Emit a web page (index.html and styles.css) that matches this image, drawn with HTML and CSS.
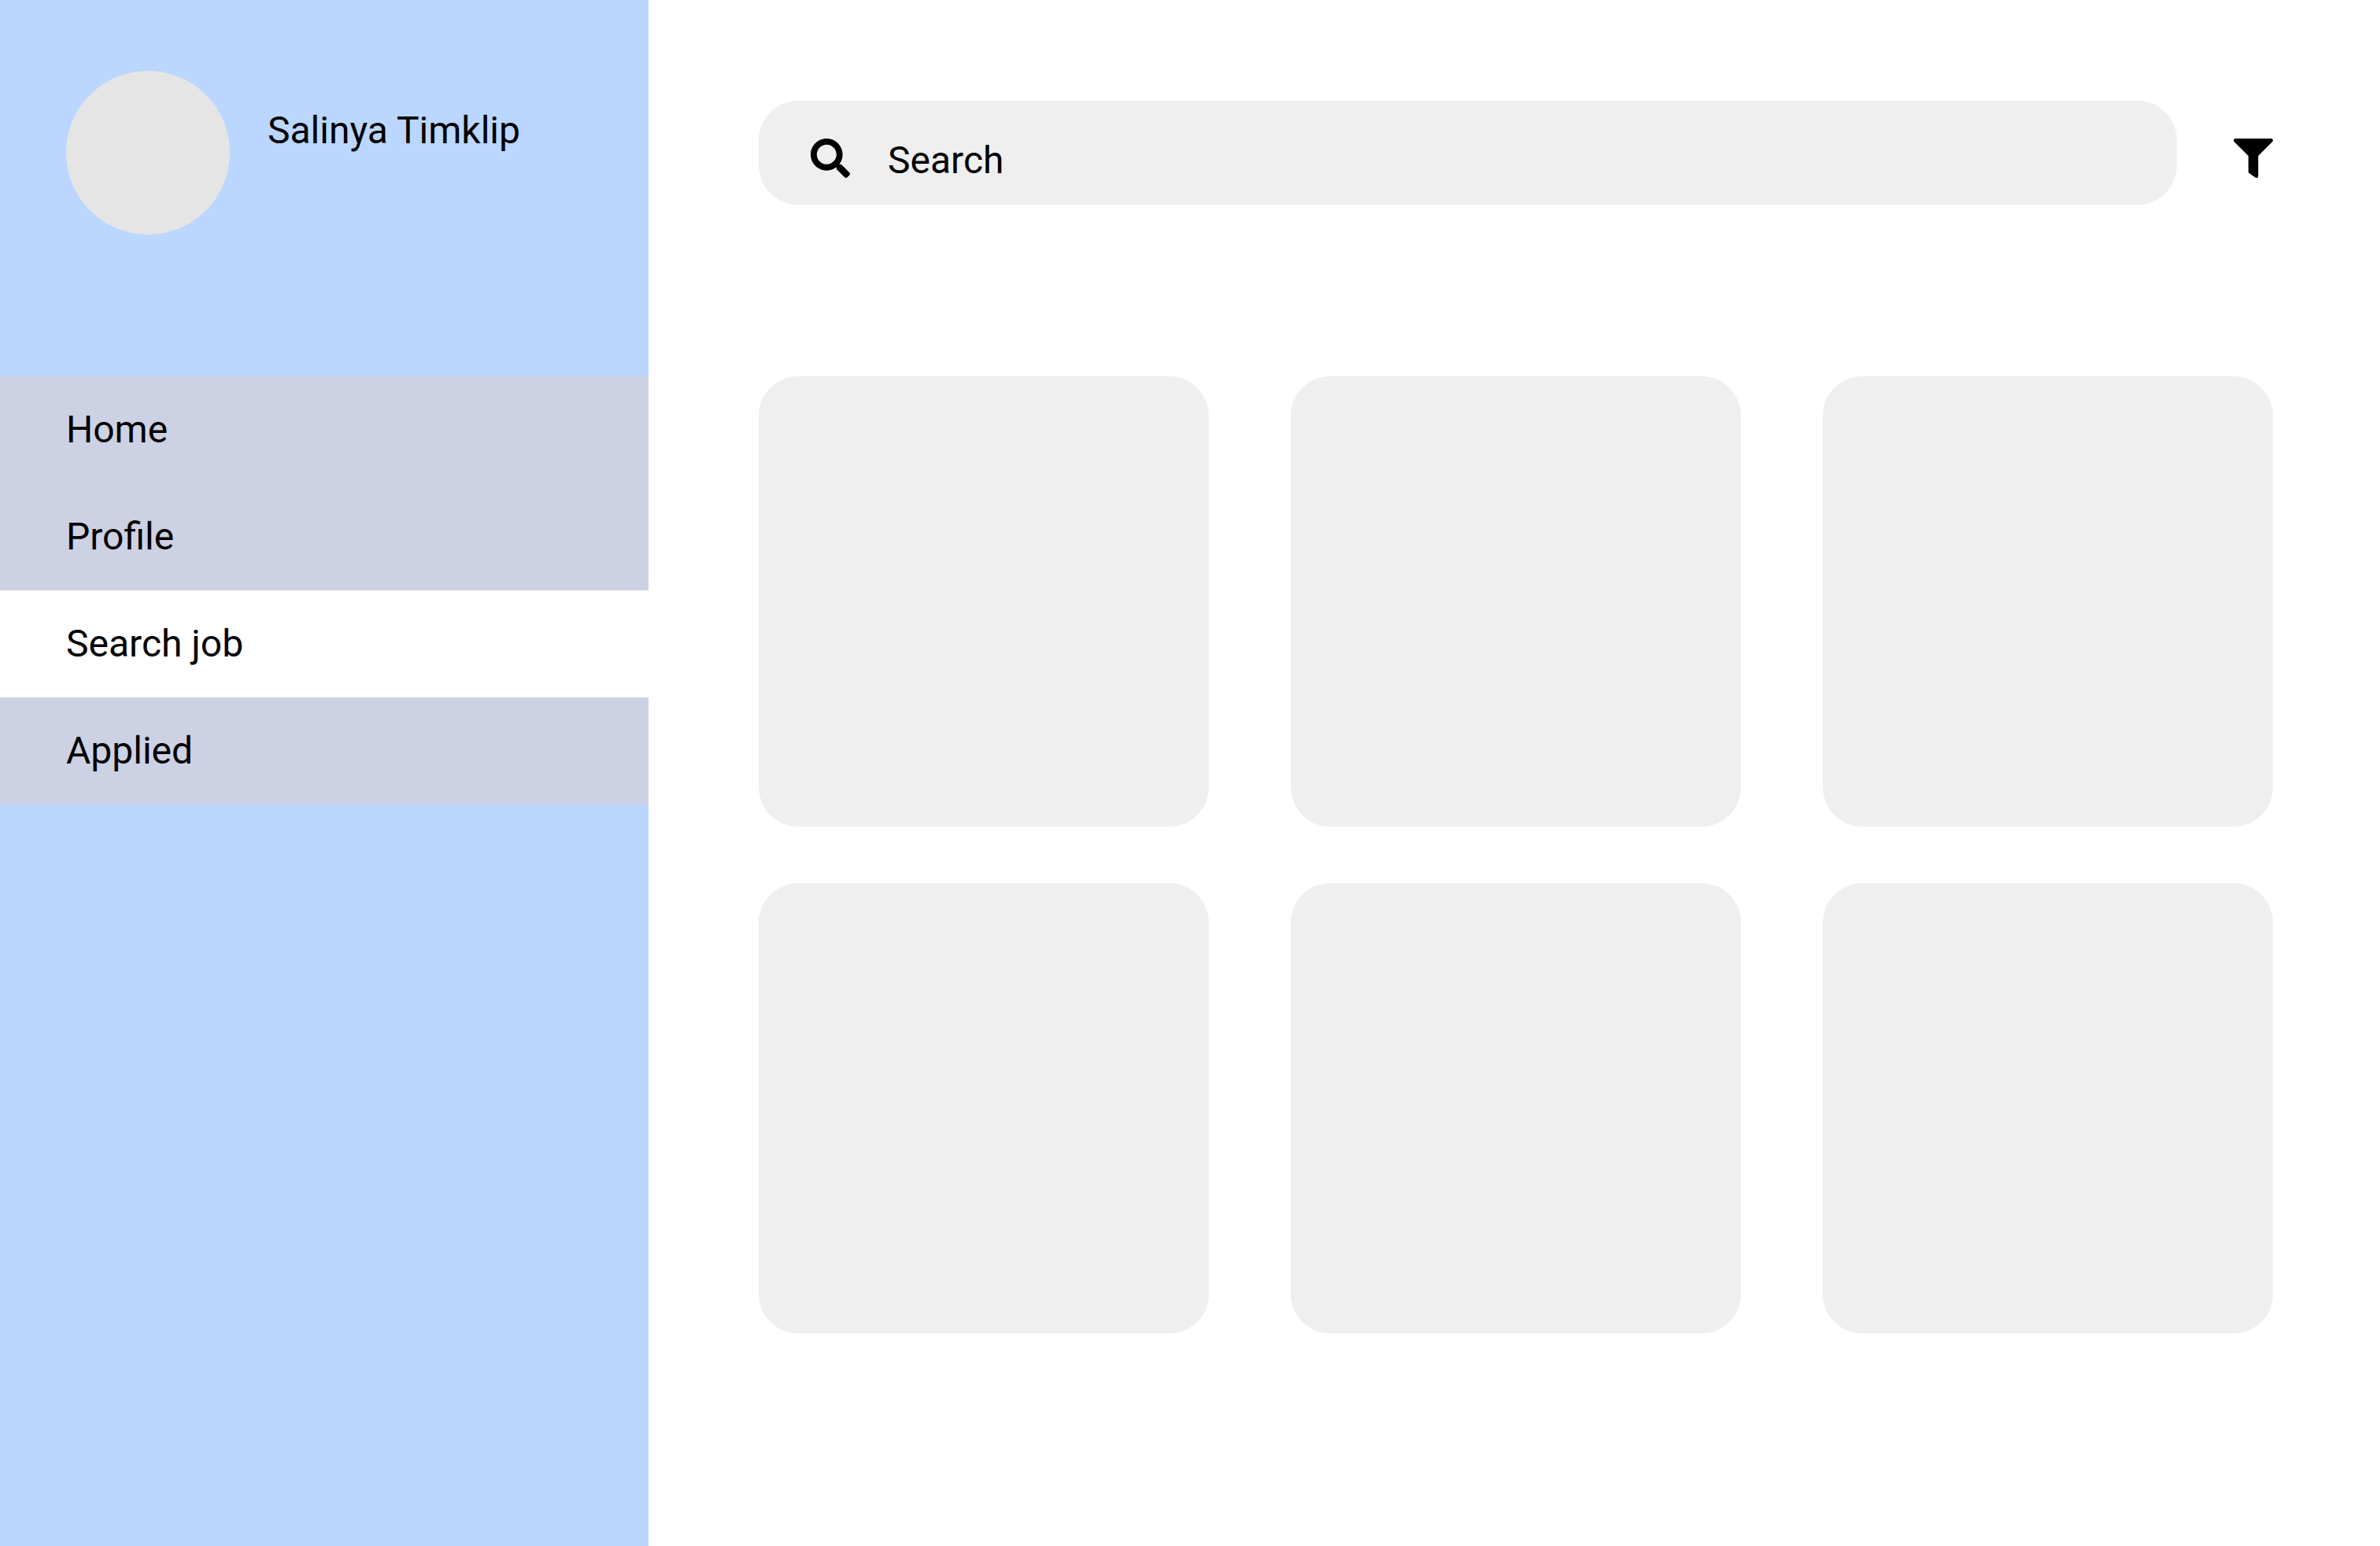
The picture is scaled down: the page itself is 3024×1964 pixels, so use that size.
FILE: index.html
```html
<!DOCTYPE html>
<html lang="en">
<head>
  <meta charset="utf-8">
  <meta name="viewport" content="width=device-width, initial-scale=1">
  <title>Search job</title>
  <link rel="stylesheet" href="styles.css">
</head>
<body>
  <div class="layout">
    <aside class="sidebar">
      <div class="user">
        <div class="avatar"></div>
        <p class="user-name">Salinya Timklip</p>
      </div>
      <nav class="nav">
        <a class="nav-link" href="#home">Home</a>
        <a class="nav-link" href="#profile">Profile</a>
        <a class="nav-link active" href="#search" aria-current="page">Search job</a>
        <a class="nav-link" href="#applied">Applied</a>
      </nav>
    </aside>
    <main class="content">
      <form class="toolbar" role="search">
        <label class="search">
          <svg class="icon" viewBox="0 0 512 512" role="img" aria-label="Search jobs"><path d="M505 442.700L405.300 343c-4.500-4.500-10.600-7-17-7H372c27.600-35.300 44-79.700 44-128C416 93.100 322.900 0 208 0S0 93.100 0 208s93.100 208 208 208c48.300 0 92.700-16.400 128-44v16.300c0 6.400 2.500 12.500 7 17l99.700 99.700c9.400 9.400 24.600 9.400 33.900 0l28.300-28.300c9.400-9.400 9.400-24.600.1-34zM208 336c-70.700 0-128-57.200-128-128 0-70.700 57.200-128 128-128 70.700 0 128 57.200 128 128 0 70.700-57.200 128-128 128z"/></svg>
          <input class="search-input" type="search" placeholder="Search">
        </label>
        <button class="filter" type="button" aria-label="Filter">
          <svg class="icon" viewBox="0 0 512 512" aria-hidden="true"><path d="M487.976 0H24.028C2.710 0-8.047 25.866 7.058 40.971L192 225.941V432c0 7.831 3.821 15.170 10.237 19.662l80 55.980C298.020 518.690 320 507.493 320 487.980V225.941l184.947-184.970C520.021 25.896 509.338 0 487.976 0z"/></svg>
        </button>
      </form>
      <section class="jobs" aria-label="Jobs">
        <article class="card"></article>
        <article class="card"></article>
        <article class="card"></article>
        <article class="card"></article>
        <article class="card"></article>
        <article class="card"></article>
      </section>
    </main>
  </div>
</body>
</html>
```
FILE: styles.css
```css
* {
  box-sizing: border-box;
}

body {
  margin: 0;
  background: #fff;
  color: #000;
  font-family: Roboto, "Liberation Sans", sans-serif;
  font-size: 48px;
  line-height: 56px;
}

.layout {
  display: flex;
  min-height: 100vh;
}

.sidebar {
  flex: 0 0 824px;
  padding-top: 90px;
  background: #bbd7ff;
}

.user {
  display: flex;
  gap: 48px;
  padding: 0 84px;
  margin-bottom: 180px;
}

.avatar {
  flex: none;
  width: 208px;
  height: 208px;
  border-radius: 50%;
  background: #e5e5e5;
}

.user-name {
  margin: 48px 0 0;
}

.nav {
  display: flex;
  flex-direction: column;
}

.nav-link {
  padding: 40px 84px;
  background: #cdd1e4;
  color: inherit;
  text-decoration: none;
}

.nav-link.active {
  background: #fff;
}

.content {
  flex: 1;
  min-width: 0;
  padding: 128px 136px 128px 140px;
}

.toolbar {
  display: flex;
  align-items: flex-start;
  gap: 72px;
  margin-bottom: 218px;
}

.search {
  flex: 1;
  display: flex;
  align-items: flex-start;
  gap: 48px;
  padding: 48px 66px 28px;
  border-radius: 50px;
  background: #efefef;
}

.search-input {
  flex: 1;
  min-width: 0;
  height: 56px;
  padding: 0;
  border: 0;
  outline: 0;
  background: none;
  color: inherit;
  font: inherit;
  appearance: none;
}

.search-input::placeholder {
  color: #000;
  opacity: 1;
}

.icon {
  display: block;
  flex: none;
  width: 50px;
  height: 50px;
  fill: currentColor;
}

.filter {
  margin-top: 48px;
  padding: 0;
  border: 0;
  background: none;
  color: inherit;
  cursor: pointer;
}

.jobs {
  display: grid;
  grid-template-columns: repeat(3, 1fr);
  gap: 72px 104px;
}

.card {
  aspect-ratio: 1;
  border-radius: 50px;
  background: #efefef;
}
```
